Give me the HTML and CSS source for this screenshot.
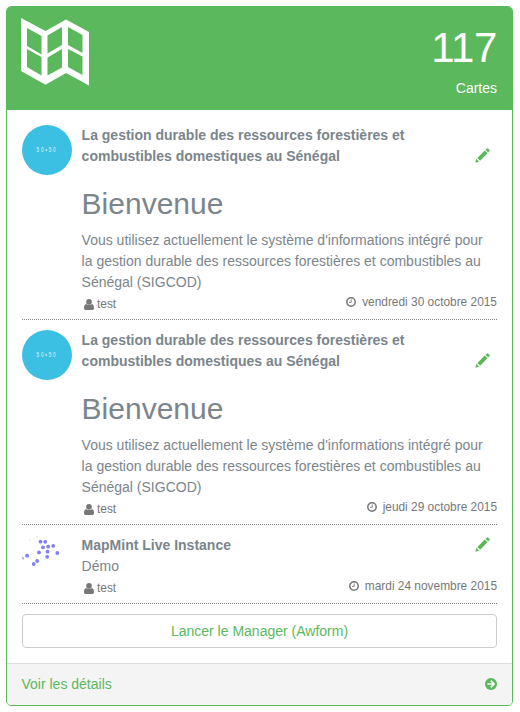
FILE: index.html
```
<!DOCTYPE html>
<html lang="fr">
<head>
<meta charset="utf-8">
<title>Cartes</title>
<link rel="stylesheet" href="styles.css">
</head>
<body>
<svg class="defs" width="0" height="0">
  <symbol id="pen" viewBox="0 0 15 15"><path d="M0.3 14.7 1.3 10.7 4.3 13.7ZM2.3 9.900 9.800 2.600 12.500 5.200 5.100 12.700ZM10.600 1.800 11.900 0.500Q12.500 0 13.100 0.500L14.500 1.900Q15 2.500 14.500 3.100L13.200 4.400Z"/></symbol>
  <symbol id="user" viewBox="0 0 10 11"><circle cx="5" cy="2.9" r="2.8"/><path d="M2.2 4.9C.7 5.1 0 6.6 0 8.9 0 10.2.8 11 2 11H8C9.2 11 10 10.2 10 8.900 10 6.600 9.300 5.100 7.800 4.900 6.300 6.500 3.700 6.500 2.200 4.900Z"/></symbol>
  <symbol id="clock" viewBox="0 0 10 10"><circle cx="5" cy="5" r="4.2" fill="none" stroke="currentColor" stroke-width="1.5"/><path d="M5.200 2.400V5.400H3" fill="none" stroke="currentColor" stroke-width=".9"/></symbol>
</svg>
<section class="panel">
  <header class="head">
    <svg class="map" viewBox="0 0 68 68"><path fill="#fff" fill-rule="evenodd" d="M0 0 24.5 13 45 1.5 68 14V67.500L45 55 24.500 66.700 0 53ZM6 10V28L20.500 36.500V18ZM26.500 17.500V35.500L41 27V9ZM47 9V27L61.500 35V17ZM6 31V49L20.500 57.500V39ZM26.500 39.500V57.500L41 49.500V31ZM47 31V49L61.500 57V38.500Z"/></svg>
    <div class="stat"><div class="num">117</div><div class="label">Cartes</div></div>
  </header>
  <div class="content">
    <article class="item">
      <div class="avatar"><span>50•50</span></div>
      <div class="main">
        <div class="top"><strong>La gestion durable des ressources forestières et<br>combustibles domestiques au Sénégal</strong><svg class="pen"><use href="#pen"/></svg></div>
        <h1>Bienvenue</h1>
        <p>Vous utilisez actuellement le système d'informations intégré pour<br>la gestion durable des ressources forestières et combustibles au<br>Sénégal (SIGCOD)</p>
        <div class="meta"><span class="user"><svg><use href="#user"/></svg>test</span><span class="date"><svg><use href="#clock"/></svg>vendredi 30 octobre 2015</span></div>
      </div>
    </article>
    <article class="item">
      <div class="avatar"><span>50•50</span></div>
      <div class="main">
        <div class="top"><strong>La gestion durable des ressources forestières et<br>combustibles domestiques au Sénégal</strong><svg class="pen"><use href="#pen"/></svg></div>
        <h1>Bienvenue</h1>
        <p>Vous utilisez actuellement le système d'informations intégré pour<br>la gestion durable des ressources forestières et combustibles au<br>Sénégal (SIGCOD)</p>
        <div class="meta"><span class="user"><svg><use href="#user"/></svg>test</span><span class="date"><svg><use href="#clock"/></svg>jeudi 29 octobre 2015</span></div>
      </div>
    </article>
    <article class="item">
      <svg class="dots" viewBox="0 0 50 50"><g fill="#8080ee"><circle cx="18.500" cy="6.700" r="1.900"/><circle cx="23.200" cy="6.800" r="1.900"/><circle cx="21" cy="12.400" r="1.900"/><circle cx="26.200" cy="11.700" r="1.900"/><circle cx="31.200" cy="10.900" r="1.900"/><circle cx="17" cy="17.400" r="1.900"/><circle cx="25.500" cy="16.700" r="1.900"/><circle cx="35.300" cy="18" r="1.900"/><circle cx="25.200" cy="21.800" r="1.900"/><circle cx="5.100" cy="20.700" r="1.900"/><circle cx="15.200" cy="26" r="1.900"/><circle cx="11.700" cy="29" r="1.900"/><path d="M0 21.500 2 23 1 25Z"/></g><path d="M7 5.500 8.800 4M14 1.500H16" stroke="#ddd" stroke-width=".8"/></svg>
      <div class="main">
        <div class="top"><strong>MapMint Live Instance</strong><svg class="pen"><use href="#pen"/></svg></div>
        <p>Démo</p>
        <div class="meta"><span class="user"><svg><use href="#user"/></svg>test</span><span class="date"><svg><use href="#clock"/></svg>mardi 24 novembre 2015</span></div>
      </div>
    </article>
    <a class="btn">Lancer le Manager (Awform)</a>
  </div>
  <footer class="foot"><span>Voir les détails</span><svg viewBox="0 0 12 12"><circle cx="6" cy="6" r="6"/><path d="M2.300 6H8.500M5.800 2.700 9.100 6 5.800 9.300" fill="none" stroke="#f4f4f4" stroke-width="1.700"/></svg></footer>
</section>
</body>
</html>
```
FILE: styles.css
```
* { box-sizing: border-box; }
body { margin: 0; padding: 6px; background: #fff; font: 14px/21px "Liberation Sans", Arial, sans-serif; color: #7b858c; }
.defs { position: absolute; }
svg { display: block; fill: currentColor; }
.panel { width: 507px; height: 700px; border: 1px solid #5cb85c; border-radius: 5px; overflow: hidden; display: flex; flex-direction: column; }
.head { height: 103px; flex: none; background: #5cb85c; color: #fff; display: flex; justify-content: space-between; padding: 11px 15px 0 14px; }
.map { width: 68px; height: 68px; }
.stat { text-align: right; }
.num { font-size: 42px; line-height: 46px; margin-top: 7px; letter-spacing: -0.4px; }
.label { margin-top: 7px; }
.content { padding: 15px 15px 0; flex: 1; }
.item { display: flex; gap: 9.6px; padding-bottom: 5px; margin-bottom: 10px; border-bottom: 1px dotted #888; }
.avatar { width: 50px; height: 50px; flex: none; border-radius: 50%; background: #3bbfe3; color: #e6f8fc; font-size: 6.5px; line-height: 50px; text-align: center; letter-spacing: 2.6px; }
.avatar span { display: block; transform: scaleX(.7); white-space: nowrap; }
.dots { width: 50px; height: 50px; flex: none; }
.main { flex: 1; min-width: 0; }
.top { display: flex; justify-content: space-between; align-items: flex-end; white-space: nowrap; }
.pen { width: 15px; height: 15px; margin: 0 7px 4px 0; color: #5cb85c; }
h1 { margin: 20px 0 10px; font-size: 30px; line-height: 33px; font-weight: 400; }
p { margin: 0; white-space: nowrap; }
.meta { display: flex; justify-content: space-between; font-size: 11.9px; color: #777; height: 21px; }
.user, .date { display: flex; align-items: center; }
.user { gap: 3px; padding: 1px 0 0 2.4px; }
.user svg { width: 10px; height: 11px; }
.date { gap: 6px; margin-top: -3px; }
.date svg { width: 10px; height: 10px; }
.btn { display: block; height: 34px; border: 1px solid #ccc; border-radius: 4px; text-align: center; line-height: 33px; color: #5cb85c; }
.foot { height: 42px; flex: none; border-top: 1px solid #ddd; background: #f4f4f4; color: #5cb85c; display: flex; justify-content: space-between; align-items: center; padding: 0 15px 0 14.5px; }
.foot svg { width: 12px; height: 12px; margin-top: -2px; }
```
